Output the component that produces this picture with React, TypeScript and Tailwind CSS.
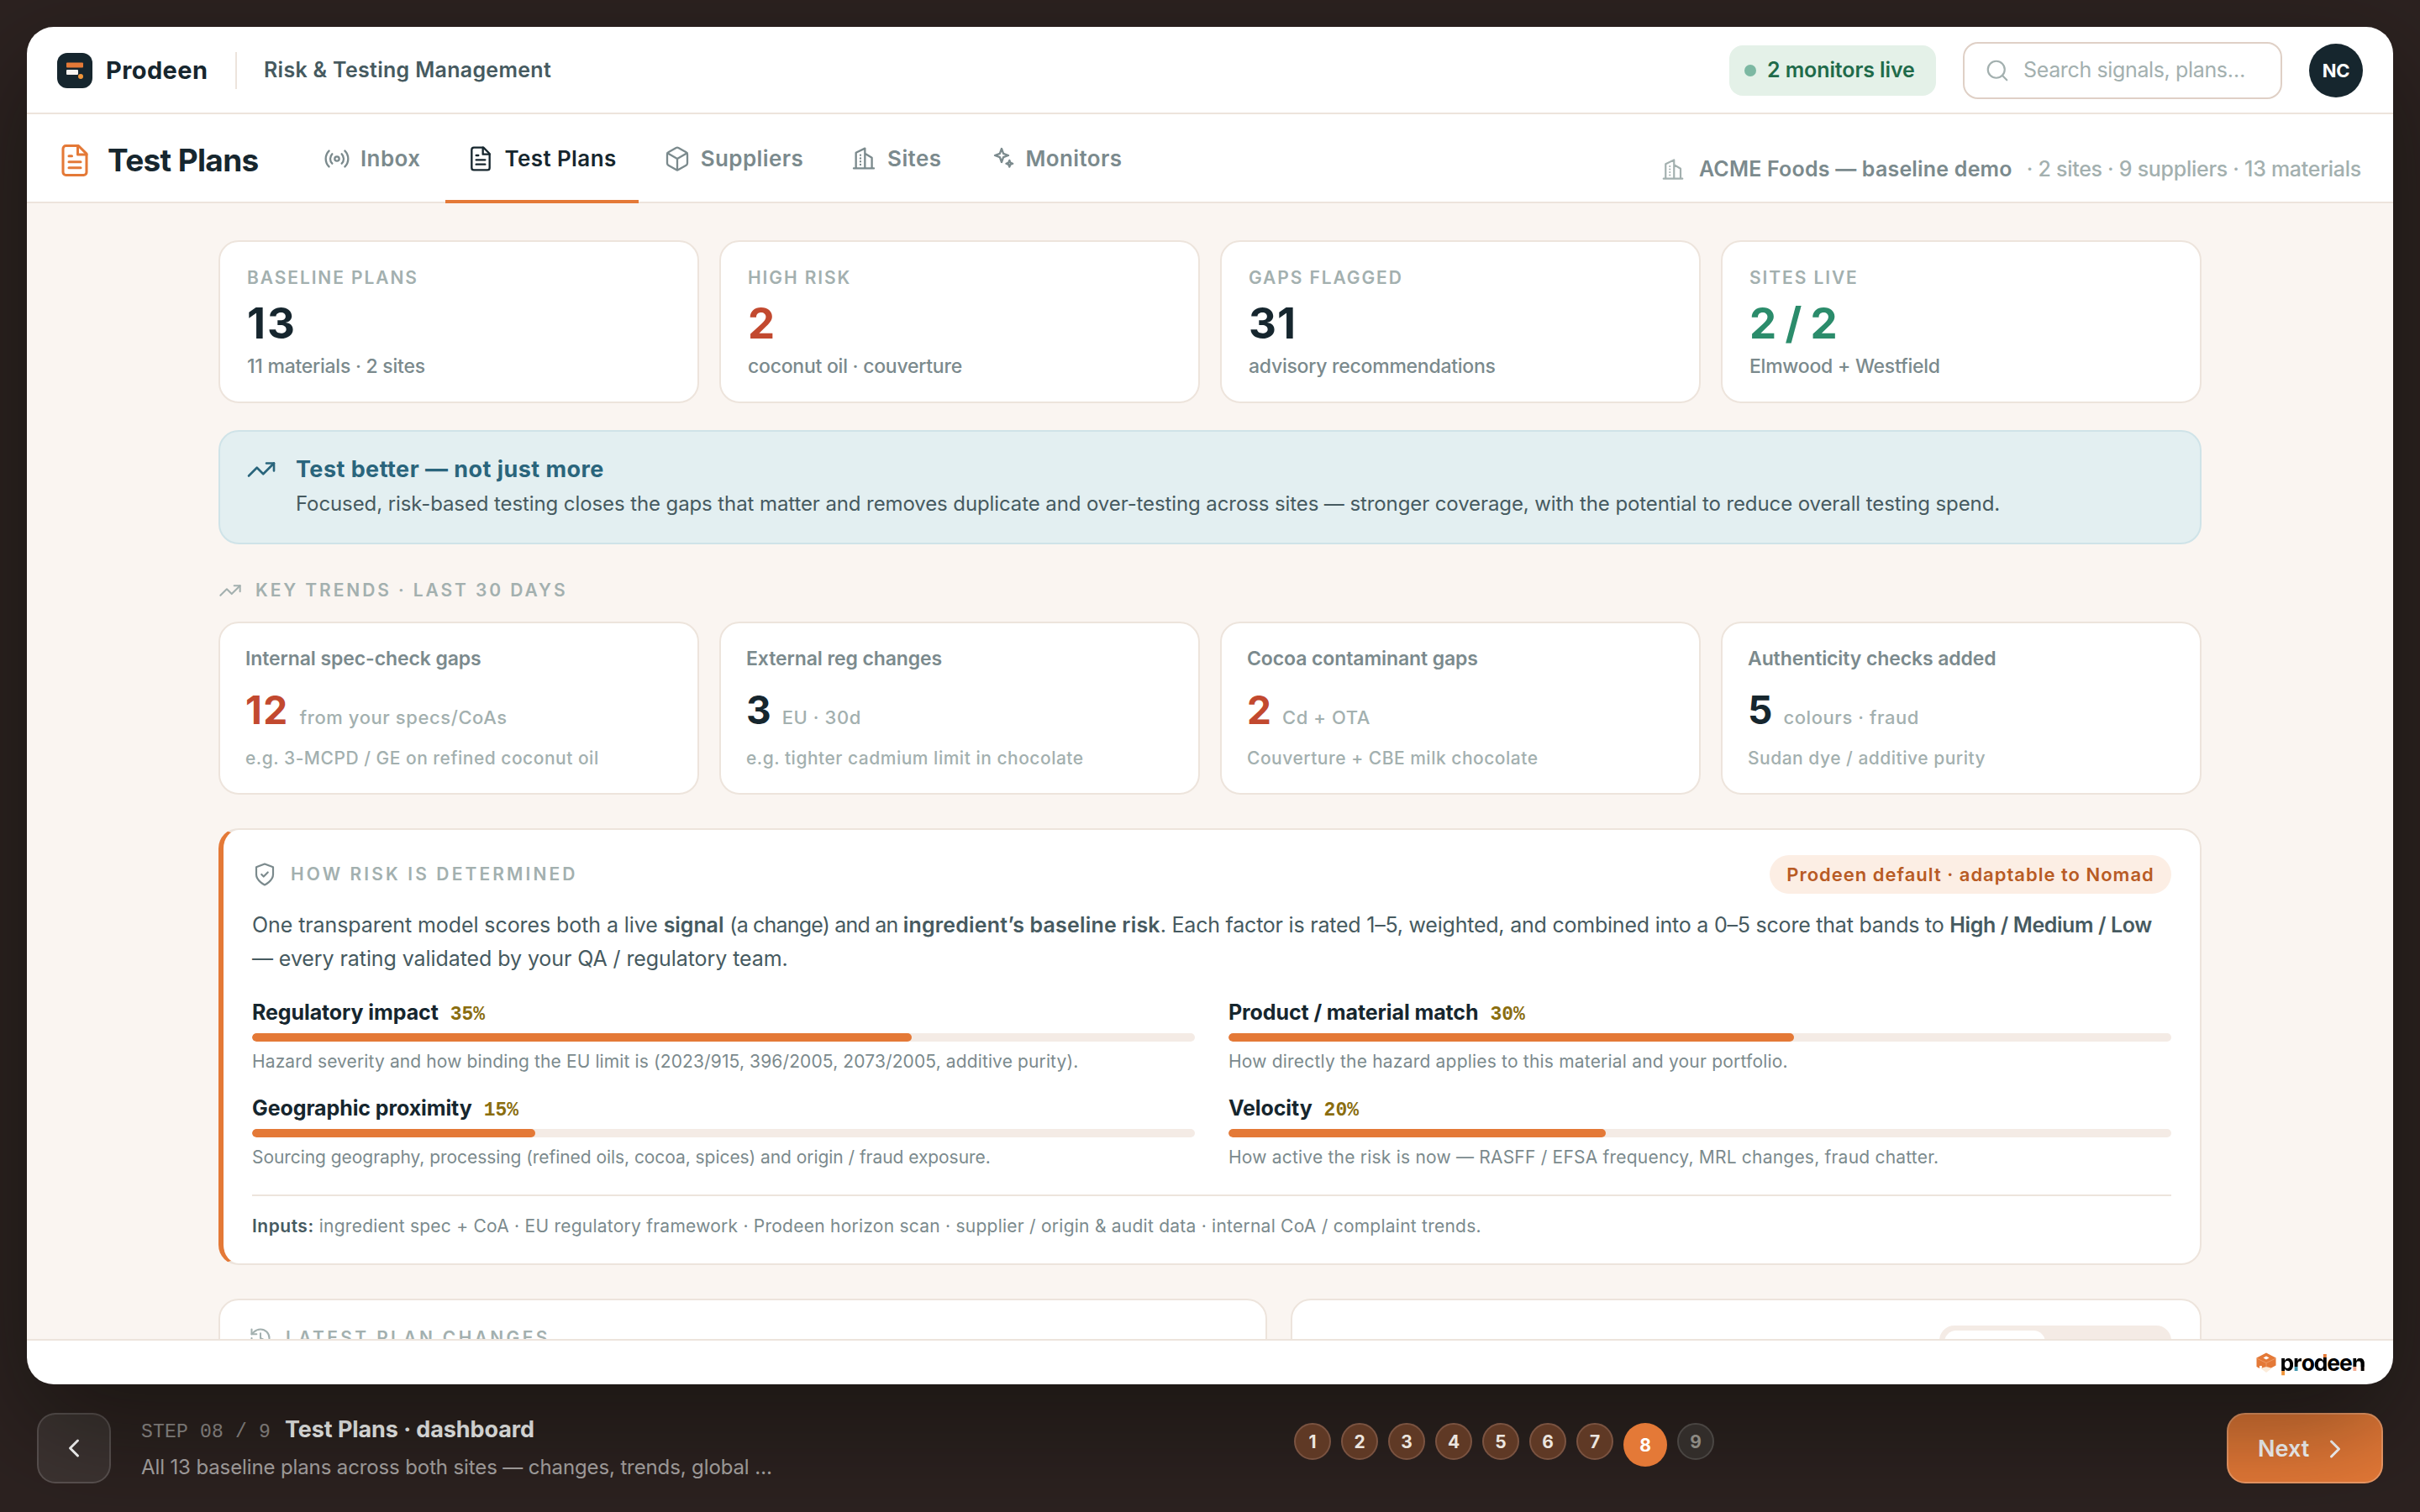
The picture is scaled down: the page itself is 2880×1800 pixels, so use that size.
import React from "react";
import { ChevronLeft, ChevronRight, History, Radio, Search, TrendingUp } from "lucide-react";

type IconProps = { className?: string; strokeWidth?: number };

function Svg({ className, strokeWidth = 1.75, children }: IconProps & { children: React.ReactNode }) {
  return (
    <svg
      viewBox="0 0 24 24"
      fill="none"
      stroke="currentColor"
      strokeWidth={strokeWidth}
      strokeLinecap="round"
      strokeLinejoin="round"
      className={className}
    >
      {children}
    </svg>
  );
}

function FileIcon(props: IconProps) {
  return (
    <Svg {...props}>
      <path d="M14.5 2H6a2 2 0 0 0-2 2v16a2 2 0 0 0 2 2h12a2 2 0 0 0 2-2V7.5z" />
      <path d="M14 2v6h6M10 9H8M16 13H8M16 17H8" />
    </Svg>
  );
}

function BoxIcon(props: IconProps) {
  return (
    <Svg {...props}>
      <path d="M21 16V8a2 2 0 0 0-1-1.73l-7-4a2 2 0 0 0-2 0l-7 4A2 2 0 0 0 3 8v8a2 2 0 0 0 1 1.73l7 4a2 2 0 0 0 2 0l7-4A2 2 0 0 0 21 16z" />
      <path d="M3.3 7L12 12l8.7-5M12 22V12" />
    </Svg>
  );
}

function BuildingIcon(props: IconProps) {
  return (
    <Svg {...props}>
      <path d="M3 20.5h18M5 20.5V6.6l8-3.9v17.8M13 7.3l6.2 3.7v9.5" />
      <path d="M9 8.8v.01M9 11.6v.01M9 14.4v.01M9 17.2v.01" />
    </Svg>
  );
}

function SparklesIcon(props: IconProps) {
  return (
    <Svg {...props}>
      <path d="M12 3l1.6 4.4L18 9l-4.4 1.6L12 15l-1.6-4.4L6 9l4.4-1.6z" />
      <path d="M19 13.4l.8 2.1 2.1.8-2.1.8-.8 2.1-.8-2.1-2.1-.8 2.1-.8z" />
    </Svg>
  );
}

function ShieldIcon(props: IconProps) {
  return (
    <Svg {...props}>
      <path d="M12 22s8-4 8-10V5l-8-3-8 3v7c0 6 8 10 8 10z" />
      <path d="M9 12l2 2 4-4" />
    </Svg>
  );
}

const tabs = [
  { label: "Inbox", icon: Radio },
  { label: "Test Plans", icon: FileIcon, active: true },
  { label: "Suppliers", icon: BoxIcon },
  { label: "Sites", icon: BuildingIcon },
  { label: "Monitors", icon: SparklesIcon },
];

const stats = [
  { label: "BASELINE PLANS", value: "13", sub: "11 materials · 2 sites", color: "text-[#16262e] tracking-[2px]" },
  { label: "HIGH RISK", value: "2", sub: "coconut oil · couverture", color: "text-[#c2492f]" },
  { label: "GAPS FLAGGED", value: "31", sub: "advisory recommendations", color: "text-[#16262e] tracking-[1px]" },
  { label: "SITES LIVE", value: "2 / 2", sub: "Elmwood + Westfield", color: "text-[#2b8c6b] tracking-[-0.9px]" },
];

const trends = [
  { title: "Internal spec-check gaps", value: "12", unit: "from your specs/CoAs", note: "e.g. 3-MCPD / GE on refined coconut oil", color: "text-[#c2492f] tracking-[1.5px]" },
  { title: "External reg changes", value: "3", unit: "EU · 30d", note: "e.g. tighter cadmium limit in chocolate", color: "text-[#16262e]" },
  { title: "Cocoa contaminant gaps", value: "2", unit: "Cd + OTA", note: "Couverture + CBE milk chocolate", color: "text-[#c2492f]" },
  { title: "Authenticity checks added", value: "5", unit: "colours · fraud", note: "Sudan dye / additive purity", color: "text-[#16262e]" },
];

const factors = [
  { name: "Regulatory impact", pct: 35, desc: "Hazard severity and how binding the EU limit is (2023/915, 396/2005, 2073/2005, additive purity).", spacing: "tracking-[0.12px]" },
  { name: "Product / material match", pct: 30, desc: "How directly the hazard applies to this material and your portfolio.", spacing: "tracking-[0.2px]" },
  { name: "Geographic proximity", pct: 15, desc: "Sourcing geography, processing (refined oils, cocoa, spices) and origin / fraud exposure.", spacing: "tracking-[-0.06px]" },
  { name: "Velocity", pct: 20, desc: "How active the risk is now — RASFF / EFSA frequency, MRL changes, fraud chatter.", spacing: "tracking-[0.21px]" },
];

function Header() {
  return (
    <header className="flex h-[104px] shrink-0 items-center border-b-2 border-[#ede4dc] px-9 pt-0.5">
      <svg viewBox="0 0 42 42" className="size-[42px]">
        <rect width="42" height="42" rx="12" fill="#16262e" />
        <rect x="11" y="11.5" width="20" height="6" rx="1" fill="#e47937" />
        <rect x="11" y="20" width="14" height="6" rx="1" fill="#faf5f1" />
        <circle cx="28" cy="28" r="3" fill="#f0953a" />
      </svg>
      <span className="ml-4 w-[124px] whitespace-nowrap text-[29px] font-bold tracking-[0.4px] text-[#16262e]">Prodeen</span>
      <span className="ml-[30px] h-11 w-0.5 bg-[#ede4dc]" />
      <span className="ml-8 text-[25px] font-semibold tracking-[0.3px] text-[#465a60]">Risk &amp; Testing Management</span>
      <div className="ml-auto flex items-center gap-8">
        <div className="flex h-[60px] w-[246px] items-center gap-[13px] rounded-2xl bg-[#e4f1e8] pl-[18px]">
          <span className="size-3.5 rounded-full bg-[#7cb8a2]" />
          <span className="whitespace-nowrap text-[25px] font-semibold tracking-[-0.1px] text-[#1f6b4a]">2 monitors live</span>
        </div>
        <div className="flex h-[68px] w-[380px] items-center gap-4 rounded-[18px] border-2 border-[#dfd0c6] pl-6 text-[#a3b0af]">
          <Search className="size-[30px]" strokeWidth={1.75} />
          <span className="text-[25px] tracking-[-0.36px]">Search signals, plans…</span>
        </div>
        <div className="flex size-16 items-center justify-center rounded-full bg-[#16262e] text-[22px] font-bold tracking-[-0.3px] text-white">NC</div>
      </div>
    </header>
  );
}

function TabBar() {
  return (
    <div className="flex h-[106px] shrink-0 border-b-2 border-[#ede4dc] px-9 pr-[38px]">
      <div className="flex items-center gap-[18px] pt-1.5">
        <FileIcon className="size-[42px] text-[#e47937]" />
        <h1 className="w-[231px] whitespace-nowrap text-[37px] font-bold tracking-[-0.65px] text-[#16262e]">Test Plans</h1>
      </div>
      <nav className="-mb-0.5 flex gap-1">
        {tabs.map(({ label, icon: Icon, active }) => (
          <div
            key={label}
            className={`flex items-center gap-3 border-b-4 px-[26px] pt-[3px] text-[26px] font-semibold tracking-[0.4px] ${
              active ? "border-[#e47937] text-[#16262e]" : "border-transparent text-[#7b8a8d]"
            }`}
          >
            <Icon className="size-8" strokeWidth={1.75} />
            {label}
          </div>
        ))}
      </nav>
      <div className="ml-auto flex items-center pt-7 text-[25px] text-[#a3b0af]">
        <BuildingIcon className="size-[30px]" />
        <span className="ml-4 font-semibold tracking-[0.2px] text-[#7b8a8d]">ACME Foods — baseline demo</span>
        <span className="ml-[17px] font-medium tracking-[-0.28px]">· 2 sites · 9 suppliers · 13 materials</span>
      </div>
    </div>
  );
}

function StatCards() {
  return (
    <div className="grid grid-cols-4 gap-6">
      {stats.map((s) => (
        <div key={s.label} className="h-[194px] rounded-3xl border-2 border-[#ede4dc] bg-white px-8 pt-[29px]">
          <div className="text-[21px] font-semibold leading-7 tracking-[1.9px] text-[#a3b0af]">{s.label}</div>
          <div className={`mt-2.5 text-[51px] font-bold leading-[60px] ${s.color}`}>{s.value}</div>
          <div className="mt-[5px] text-[23px] font-medium leading-8 tracking-[-0.25px] text-[#7b8a8d]">{s.sub}</div>
        </div>
      ))}
    </div>
  );
}

function Banner() {
  return (
    <div className="mt-8 flex h-[136px] gap-[23px] rounded-3xl border-2 border-[#cfe3e8] bg-[#e3eff1] px-[31px] pt-[27px]">
      <TrendingUp className="size-9 text-[#2a657c]" strokeWidth={1.75} />
      <div>
        <div className="text-[27px] font-bold leading-9 tracking-[0.45px] text-[#2a657c]">Test better — not just more</div>
        <div className="mt-1 whitespace-nowrap text-[24px] leading-[38px] tracking-[-0.1px] text-[#465a60]">
          Focused, risk-based testing closes the gaps that matter and removes duplicate and over-testing across sites — stronger coverage, with the potential to reduce overall testing spend.
        </div>
      </div>
    </div>
  );
}

function Trends() {
  return (
    <>
      <div className="mt-[41px] flex h-7 items-center gap-4 text-[#a3b0af]">
        <TrendingUp className="size-7" strokeWidth={1.75} />
        <span className="text-[21px] font-semibold tracking-[2.9px]">KEY TRENDS · LAST 30 DAYS</span>
      </div>
      <div className="mt-[23px] grid grid-cols-4 gap-6">
        {trends.map((t) => (
          <div key={t.title} className="h-[206px] rounded-3xl border-2 border-[#ede4dc] bg-white px-[30px] pt-[26px]">
            <div className="text-[23px] font-semibold leading-8 tracking-[-0.1px] text-[#7b8a8d]">{t.title}</div>
            <div className="mt-[17px] flex h-14 items-baseline gap-[13px]">
              <span className={`text-[46px] font-bold leading-[56px] ${t.color}`}>{t.value}</span>
              <span className="text-[22px] font-medium tracking-[0.58px] text-[#a3b0af]">{t.unit}</span>
            </div>
            <div className="mt-[15px] text-[21px] font-medium leading-[30px] tracking-[0.5px] text-[#a3b0af]">{t.note}</div>
          </div>
        ))}
      </div>
    </>
  );
}

function RiskModel() {
  return (
    <div className="mt-10 h-[520px] rounded-3xl border-2 border-l-[6px] border-[#ede4dc] border-l-[#e47937] bg-white px-[34px] pt-[30px]">
      <div className="flex h-[46px] items-center">
        <ShieldIcon className="size-[30px] text-[#7b8a8d]" />
        <span className="ml-4 text-[21px] font-semibold tracking-[3.1px] text-[#a3b0af]">HOW RISK IS DETERMINED</span>
        <span className="ml-auto flex h-[46px] w-[478px] items-center justify-center whitespace-nowrap rounded-full bg-[#fceee4] pt-px text-[22px] font-semibold tracking-[1px] text-[#b85b24]">
          Prodeen default · adaptable to Nomad
        </span>
      </div>
      <p className="mt-[17px] whitespace-nowrap text-[25px] leading-10 tracking-[-0.08px] text-[#465a60]">
        One transparent model scores both a live <b className="font-semibold">signal</b>{" "}
        <span className="tracking-[-0.8px]">(a change) and an </span>
        <b className="font-semibold tracking-[0.18px]">ingredient’s baseline risk</b>
        <span className="tracking-[-0.22px]">. Each factor is rated 1–5, weighted, and combined into a 0–5 score that bands to </span>
        <b className="font-semibold tracking-[-0.4px]">High / Medium / Low</b>
        <br />— every rating validated by your QA / regulatory team.
      </p>
      <div className="mt-[27px] grid grid-cols-2 gap-x-10 gap-y-[23px]">
        {factors.map((f) => (
          <div key={f.name}>
            <div className="flex h-[34px] items-baseline gap-3.5 leading-[34px]">
              <span className="text-[25px] font-bold tracking-[-0.1px] text-[#16262e]">{f.name}</span>
              <span className="font-['Liberation_Mono',monospace] text-[23px] font-bold text-[#8a6d0f]">{f.pct}%</span>
            </div>
            <div className="mt-2 h-2.5 overflow-hidden rounded-full bg-[#f4ebe5]">
              <div className="h-full rounded-full bg-[#e47937]" style={{ width: `${f.pct * 2}%` }} />
            </div>
            <div className={`mt-[9px] whitespace-nowrap text-[21px] leading-[30px] text-[#7b8a8d] ${f.spacing}`}>{f.desc}</div>
          </div>
        ))}
      </div>
      <div className="mt-[29px] border-t-2 border-[#ede4dc] pt-[21px] text-[21px] leading-[30px] tracking-[0.24px] text-[#7b8a8d]">
        <b className="font-semibold tracking-[0.5px] text-[#465a60]">Inputs:</b> ingredient spec + CoA · EU regulatory framework · Prodeen horizon scan · supplier / origin &amp; audit data · internal CoA / complaint trends.
      </div>
    </div>
  );
}

function Wordmark() {
  return (
    <div className="flex items-center gap-1">
      <svg viewBox="0 0 24 24" className="size-6">
        <path d="M6 15l12 0v4.500l-6 4.500-6-4.500z" fill="#fcebd9" />
        <path d="M12 .5L23.500 6.500v9L18 18.500l-6-1.500-5 1.500V16l-3 0v3L.5 17V6.500z" fill="#e47937" />
        <path d="M12 4.500l3.500 2-3.500 2-3.500-2z" fill="#fff" />
        <path d="M.5 7L12 12.500 23.500 7M12 12.500v5" fill="none" stroke="#f2a878" strokeWidth=".7" />
      </svg>
      <span className="flex text-[26.5px] font-bold leading-9 tracking-[-1.15px]">
        <span className="bg-[linear-gradient(#000_78%,#f0953a_78%)] bg-clip-text text-transparent">p</span>
        <span className="bg-[linear-gradient(#000_63%,#3c93ac_63%)] bg-clip-text text-transparent">r</span>
        <span className="text-black">o</span>
        <span className="bg-[linear-gradient(#e47937_33%,#000_33%)] bg-clip-text text-transparent">d</span>
        <span className="text-black">ee</span>
        <span className="bg-[linear-gradient(to_right,transparent_45%,#000_45%),linear-gradient(#000_63%,#f0a58c_63%)] bg-clip-text text-transparent">n</span>
      </span>
    </div>
  );
}

function StepBar() {
  return (
    <div className="flex h-[152px] px-11 pt-[34px]">
      <div className="flex w-[1496px]">
        <div className="flex h-[84px] w-[88px] items-center justify-center rounded-[22px] border-2 border-white/15 bg-white/8 text-white">
          <ChevronLeft className="size-9" strokeWidth={2} />
        </div>
        <div className="ml-9 pt-0.5">
          <div className="flex h-9 items-baseline leading-9">
            <span className="whitespace-pre font-['Liberation_Mono',monospace] text-[23px] tracking-[0.2px] text-white/50">STEP 08 / 9</span>
            <span className="ml-[17px] text-[27px] font-bold tracking-[-0.1px] text-white">Test Plans · dashboard</span>
          </div>
          <div className="mt-[9px] text-[24px] leading-9 tracking-[-0.12px] text-white/60">
            All 13 baseline plans across both sites — changes, trends, global …
          </div>
        </div>
      </div>
      <div className="relative z-20 flex items-start gap-3 pt-3 text-[21px] font-bold">
        {[1, 2, 3, 4, 5, 6, 7].map((n) => (
          <span key={n} className="flex size-11 items-center justify-center rounded-full border-2 border-[#7a5341] bg-[#5f3925] pt-px text-[#ece5df]">
            {n}
          </span>
        ))}
        <span className="flex size-[52px] items-center justify-center rounded-full bg-[#e47937] pt-0.5 text-white">8</span>
        <span className="flex size-11 items-center justify-center rounded-full border-2 border-[#4a4643] bg-[#322d2a] pt-px text-[#8d8a83]">9</span>
      </div>
      <div className="ml-auto flex h-[84px] w-[186px] items-center gap-[13px] rounded-[22px] border-2 border-[#ee9a66] bg-[#e47937] pl-[35px] pt-0.5 text-[27px] font-semibold text-white">
        Next
        <ChevronRight className="size-9" strokeWidth={2} />
      </div>
    </div>
  );
}

export default function App() {
  return (
    <div className="h-[1800px] w-[2880px] overflow-hidden bg-[#2c2220] pt-8 font-['Inter',sans-serif]">
      <div className="relative z-10 mx-8 flex h-[1616px] flex-col overflow-hidden rounded-[32px] bg-white shadow-[0_48px_128px_rgba(4,8,0,0.42)]">
        <Header />
        <TabBar />
        <main className="h-[1352px] overflow-hidden bg-[#faf5f1] px-[228px] pt-11">
          <StatCards />
          <Banner />
          <Trends />
          <RiskModel />
          <div className="mt-10 grid grid-cols-[1248px_1fr] gap-7">
            <div className="h-[300px] rounded-3xl border-2 border-[#ede4dc] bg-white px-[34px] pt-[31px]">
              <div className="flex h-7 items-center gap-4 text-[#a3b0af]">
                <History className="size-7" strokeWidth={1.75} />
                <span className="text-[21px] font-semibold tracking-[3.35px]">LATEST PLAN CHANGES</span>
              </div>
            </div>
            <div className="flex h-[300px] justify-end rounded-3xl border-2 border-[#ede4dc] bg-white px-[34px] pt-[30px]">
              <div className="h-[60px] w-[276px] rounded-[18px] bg-[#f4ebe5] p-1.5">
                <div className="h-12 w-[120px] rounded-[14px] bg-white" />
              </div>
            </div>
          </div>
        </main>
        <footer className="flex h-[54px] items-center justify-end border-t-2 border-[#ede4dc] pr-[34px]">
          <Wordmark />
        </footer>
      </div>
      <StepBar />
    </div>
  );
}
